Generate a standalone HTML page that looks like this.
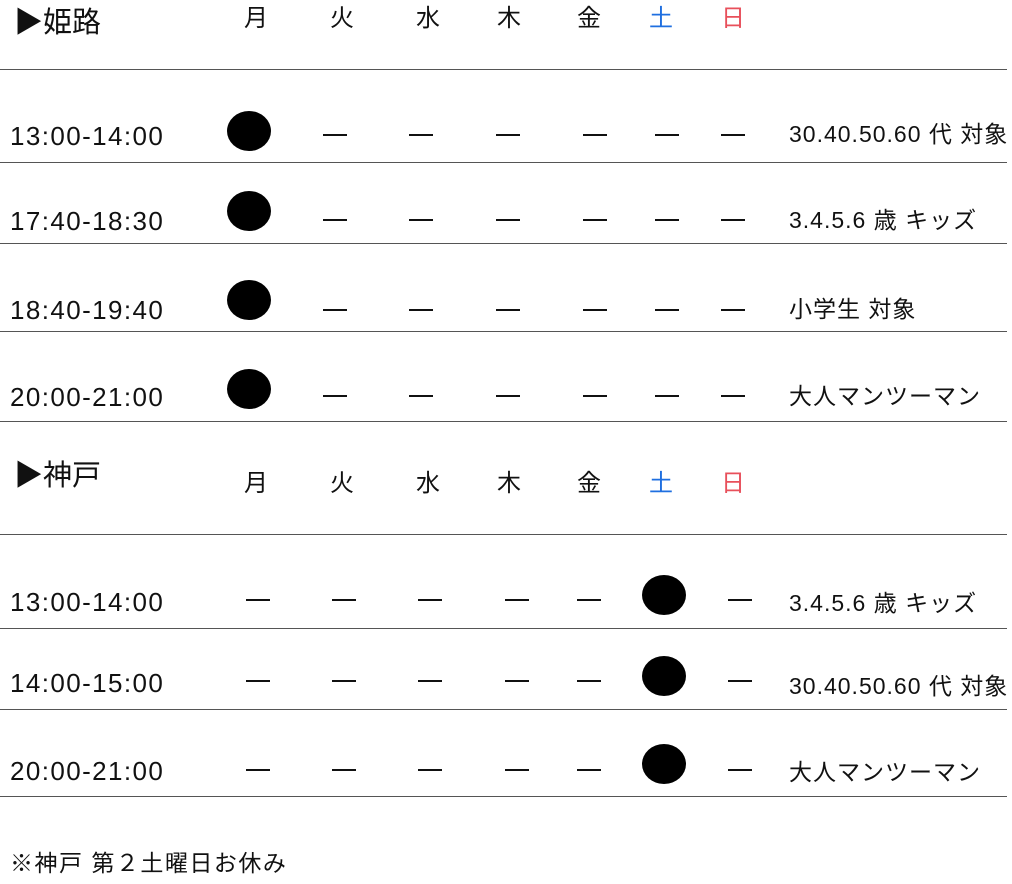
<!DOCTYPE html>
<html><head><meta charset="utf-8"><style>
body{margin:0;width:1012px;height:884px;background:#fff;position:relative;overflow:hidden;font-family:"Liberation Sans","Noto Sans CJK JP",sans-serif;color:#111}
.a{position:absolute;white-space:nowrap;line-height:1}
.l{position:absolute;left:0;width:1007px;height:1px;background:#555}
.t{font-size:26px;letter-spacing:1.4px;left:10px}
.d{font-size:24px;transform:translateX(-50%)}
.r{font-size:23px;left:789px;letter-spacing:1px}
.c{position:absolute;width:44px;height:40px;border-radius:50%;background:#000}
.m{position:absolute;width:24px;height:2px;background:#111}
.h{font-size:29px;left:14px}
</style></head><body>
<div class="a h" style="top:9px">▶姫路</div>
<div class="a d" style="left:256px;top:7px">月</div>
<div class="a d" style="left:342px;top:7px">火</div>
<div class="a d" style="left:428px;top:7px">水</div>
<div class="a d" style="left:509px;top:7px">木</div>
<div class="a d" style="left:589px;top:7px">金</div>
<div class="a d" style="left:661px;top:7px;color:#1f6fe0">土</div>
<div class="a d" style="left:733px;top:7px;color:#e8505b">日</div>
<div class="l" style="top:69px"></div>

<div class="a t" style="top:123px">13:00-14:00</div>
<div class="c" style="left:227px;top:111px"></div>
<div class="a r" style="top:123px">30.40.50.60 代 対象</div>
<div class="l" style="top:162px"></div>

<div class="a t" style="top:208px">17:40-18:30</div>
<div class="c" style="left:227px;top:191px"></div>
<div class="a r" style="top:209px">3.4.5.6 歳 キッズ</div>
<div class="l" style="top:243px"></div>

<div class="a t" style="top:297px">18:40-19:40</div>
<div class="c" style="left:227px;top:280px"></div>
<div class="a r" style="top:298px">小学生 対象</div>
<div class="l" style="top:331px"></div>

<div class="a t" style="top:384px">20:00-21:00</div>
<div class="c" style="left:227px;top:369px"></div>
<div class="a r" style="top:385px">大人マンツーマン</div>
<div class="l" style="top:421px"></div>

<div class="a h" style="top:462px">▶神戸</div>
<div class="a d" style="left:256px;top:472px">月</div>
<div class="a d" style="left:342px;top:472px">火</div>
<div class="a d" style="left:428px;top:472px">水</div>
<div class="a d" style="left:509px;top:472px">木</div>
<div class="a d" style="left:589px;top:472px">金</div>
<div class="a d" style="left:661px;top:472px;color:#1f6fe0">土</div>
<div class="a d" style="left:733px;top:472px;color:#e8505b">日</div>
<div class="l" style="top:534px"></div>

<div class="a t" style="top:589px">13:00-14:00</div>
<div class="c" style="left:642px;top:575px"></div>
<div class="a r" style="top:592px">3.4.5.6 歳 キッズ</div>
<div class="l" style="top:628px"></div>

<div class="a t" style="top:670px">14:00-15:00</div>
<div class="c" style="left:642px;top:656px"></div>
<div class="a r" style="top:675px">30.40.50.60 代 対象</div>
<div class="l" style="top:709px"></div>

<div class="a t" style="top:758px">20:00-21:00</div>
<div class="c" style="left:642px;top:744px"></div>
<div class="a r" style="top:761px">大人マンツーマン</div>
<div class="l" style="top:796px"></div>

<div class="a" style="left:10px;top:852px;font-size:23px;letter-spacing:1.5px">※神戸 第２土曜日お休み</div>

<div class="m" style="left:323px;top:134px"></div><div class="m" style="left:409px;top:134px"></div><div class="m" style="left:496px;top:134px"></div><div class="m" style="left:583px;top:134px"></div><div class="m" style="left:655px;top:134px"></div><div class="m" style="left:721px;top:134px"></div>
<div class="m" style="left:323px;top:219px"></div><div class="m" style="left:409px;top:219px"></div><div class="m" style="left:496px;top:219px"></div><div class="m" style="left:583px;top:219px"></div><div class="m" style="left:655px;top:219px"></div><div class="m" style="left:721px;top:219px"></div>
<div class="m" style="left:323px;top:309px"></div><div class="m" style="left:409px;top:309px"></div><div class="m" style="left:496px;top:309px"></div><div class="m" style="left:583px;top:309px"></div><div class="m" style="left:655px;top:309px"></div><div class="m" style="left:721px;top:309px"></div>
<div class="m" style="left:323px;top:395px"></div><div class="m" style="left:409px;top:395px"></div><div class="m" style="left:496px;top:395px"></div><div class="m" style="left:583px;top:395px"></div><div class="m" style="left:655px;top:395px"></div><div class="m" style="left:721px;top:395px"></div>
<div class="m" style="left:246px;top:599px"></div><div class="m" style="left:332px;top:599px"></div><div class="m" style="left:418px;top:599px"></div><div class="m" style="left:505px;top:599px"></div><div class="m" style="left:577px;top:599px"></div><div class="m" style="left:728px;top:599px"></div>
<div class="m" style="left:246px;top:680px"></div><div class="m" style="left:332px;top:680px"></div><div class="m" style="left:418px;top:680px"></div><div class="m" style="left:505px;top:680px"></div><div class="m" style="left:577px;top:680px"></div><div class="m" style="left:728px;top:680px"></div>
<div class="m" style="left:246px;top:769px"></div><div class="m" style="left:332px;top:769px"></div><div class="m" style="left:418px;top:769px"></div><div class="m" style="left:505px;top:769px"></div><div class="m" style="left:577px;top:769px"></div><div class="m" style="left:728px;top:769px"></div>
</body></html>
